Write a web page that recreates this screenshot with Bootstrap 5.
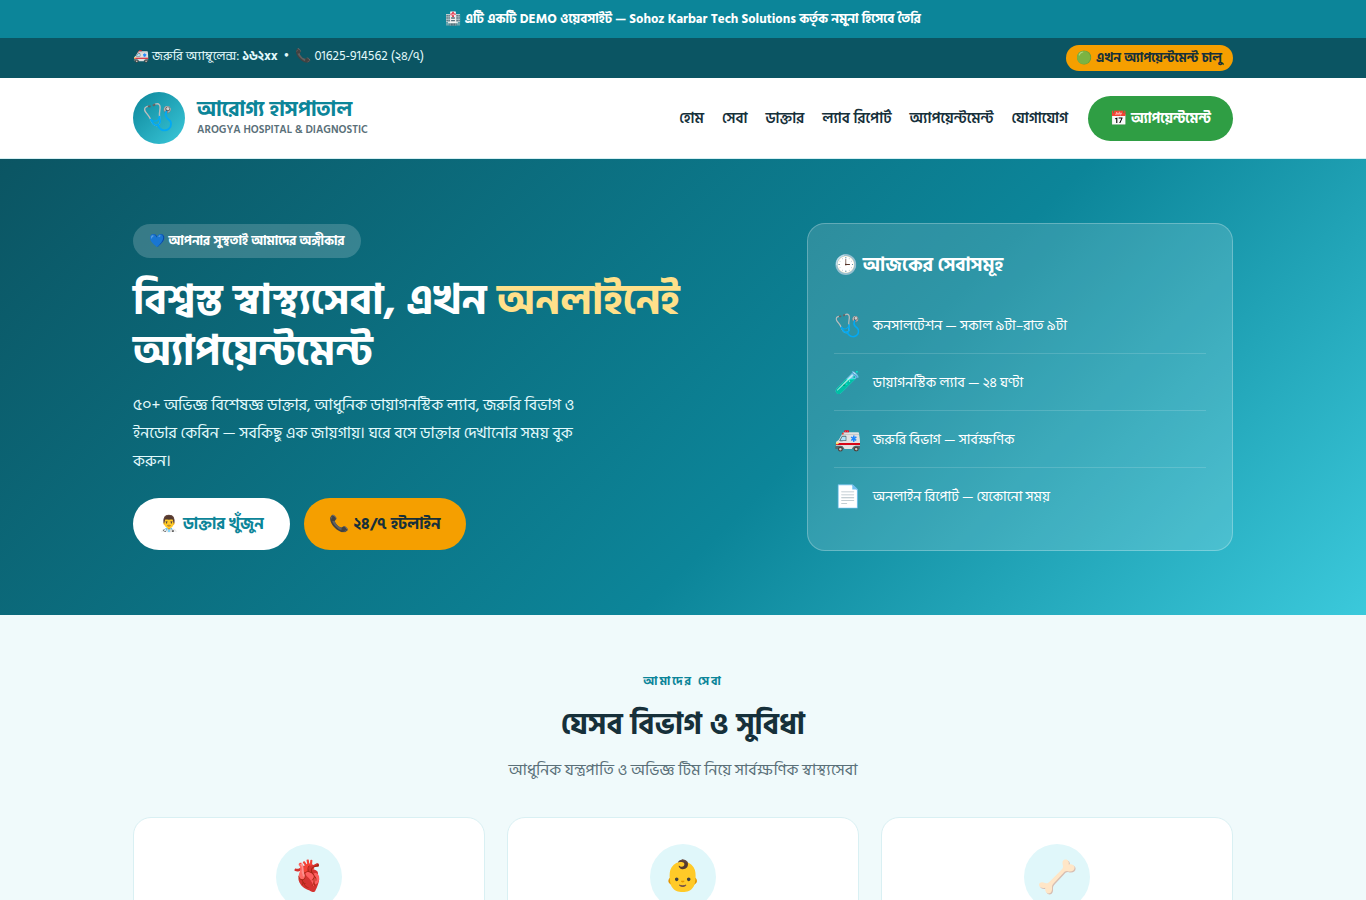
<!DOCTYPE html>
<html lang="bn">
<head>
<meta charset="utf-8">
<meta name="viewport" content="width=device-width, initial-scale=1">
<title>আরোগ্য হাসপাতাল</title>
<link rel="stylesheet" href="https://cdn.jsdelivr.net/npm/bootstrap@5.3.0/dist/css/bootstrap.min.css">
<style>
:root { --teal: #0c8599; --teal-dark: #0b5563; --cyan: #3bc9db; --green: #2f9e44; --amber: #f59f00; --ink: #16303a; --muted: #5a7079; }
body { font-family: "Hind Siliguri", "Noto Sans", "Noto Color Emoji", sans-serif; color: var(--ink); background: #f0fafb; font-size: 16px; line-height: 1.7; }
.container { max-width: 1140px; padding-left: 20px; padding-right: 20px; }
.demo-bar { background: var(--teal); color: #fff; font-size: 13px; padding: 8px 16px; }
.info-bar { background: var(--teal-dark); color: #e3fafc; font-size: 13px; padding: 7px 0; }
.info-bar a { color: inherit; }
.open-pill { background: var(--amber); padding: 2px 11px; color: var(--ink); }
.site-nav { background: #fff; border-bottom: 1px solid #d5f0f3; padding: 14px 0; }
.brand-logo { width: 52px; height: 52px; font-size: 26px; line-height: 1; background: linear-gradient(135deg, var(--teal), var(--cyan)); }
.brand-name { color: var(--teal); font-size: 21px; line-height: 24px; }
.brand-sub { color: var(--muted); font-size: 11px; line-height: 16px; }
.site-nav .navbar-nav { gap: 18px; }
.site-nav .navbar-nav .nav-link { color: var(--ink); font-size: 15px; font-weight: 600; padding: 2px 0 0; }
.book-btn { --bs-btn-color: #fff; --bs-btn-bg: var(--green); --bs-btn-hover-color: #fff; --bs-btn-hover-bg: #2b8a3e; --bs-btn-border-width: 0; font-size: 14px; line-height: 25px; padding: 10px 22px; margin-left: 20px; }
.hero { background: linear-gradient(135deg, var(--teal-dark), var(--teal) 60%, var(--cyan)); color: #fff; padding: 64px 0; }
.hero-grid { display: grid; grid-template-columns: 3fr 2fr; gap: 36px; }
.hero-tag { background: rgba(255,255,255,.18); font-size: 13px; padding: 6px 16px; margin-bottom: 18px; }
.hero h1 { font-size: 42px; line-height: 51px; margin-bottom: 13px; }
.hero h1 span { color: #ffe08a; }
.hero-text { color: #e3fafc; font-size: 16px; line-height: 28px; max-width: 460px; margin-bottom: 23px; }
.hero-actions { gap: 14px; }
.hero-btn { --bs-btn-border-width: 0; --bs-btn-color: var(--ink); font-size: 16px; line-height: 28px; padding: 12px 26px; }
.hero-btn-light { --bs-btn-color: var(--teal); --bs-btn-bg: #fff; --bs-btn-hover-bg: #e3fafc; }
.hero-btn-amber { --bs-btn-bg: var(--amber); --bs-btn-hover-bg: #f08c00; }
.today { background: rgba(255,255,255,.14); border: 1px solid rgba(255,255,255,.25); border-radius: 18px; padding: 26px; }
.today h2 { font-size: 19px; line-height: 32px; margin-bottom: 15px; }
.today li { font-size: 14px; gap: 11px; min-height: 57px; padding-top: 2px; border-bottom: 1px solid rgba(255,255,255,.15); }
.today li:last-child { border-bottom: 0; min-height: 56px; }
.today li span { font-size: 22px; line-height: 1; }
.services { padding: 56px 0; }
.eyebrow { color: var(--teal); font-size: 12px; letter-spacing: 2px; line-height: 22px; }
.services h2 { font-size: 30px; line-height: 50px; margin: 7px 0; }
.services-lead { color: var(--muted); font-size: 16px; line-height: 26px; margin-bottom: 34px; }
.services .row { --bs-gutter-x: 22px; --bs-gutter-y: 22px; }
.service-card { background: #fff; border: 1px solid #d9f0f3; border-radius: 18px; padding: 26px; }
.service-icon { width: 66px; height: 66px; font-size: 30px; line-height: 1; background: #e0f7fa; }
@media (max-width: 991px) { .hero-grid { grid-template-columns: 1fr; } .book-btn { margin: 12px 0 0; } }
</style>
</head>
<body>
<div class="demo-bar text-center fw-bold">🏥 এটি একটি DEMO ওয়েবসাইট — Sohoz Karbar Tech Solutions কর্তৃক নমুনা হিসেবে তৈরি</div>

<div class="info-bar">
  <div class="container d-flex flex-wrap justify-content-between">
    <div>🚑 জরুরি অ্যাম্বুলেন্স: <b>১৬২xx</b> &nbsp;•&nbsp; 📞 <a class="text-decoration-none" href="tel:01625914562">01625-914562</a> (২৪/৭)</div>
    <span class="open-pill rounded-pill fw-bold">🟢 এখন অ্যাপয়েন্টমেন্ট চালু</span>
  </div>
</div>

<nav class="site-nav navbar navbar-expand-lg">
  <div class="container">
    <a class="navbar-brand d-flex align-items-center p-0 m-0" href="#">
      <span class="brand-logo rounded-circle d-flex align-items-center justify-content-center me-2">🩺</span>
      <span class="ms-1">
        <span class="brand-name d-block fw-bold">আরোগ্য হাসপাতাল</span>
        <span class="brand-sub d-block fw-semibold">AROGYA HOSPITAL &amp; DIAGNOSTIC</span>
      </span>
    </a>
    <button class="navbar-toggler" type="button" data-bs-toggle="collapse" data-bs-target="#menu" aria-label="মেনু" aria-controls="menu"><span class="navbar-toggler-icon"></span></button>
    <div class="collapse navbar-collapse" id="menu">
      <ul class="navbar-nav ms-auto">
        <li><a class="nav-link" href="#">হোম</a></li>
        <li><a class="nav-link" href="#services">সেবা</a></li>
        <li><a class="nav-link" href="#">ডাক্তার</a></li>
        <li><a class="nav-link" href="#">ল্যাব রিপোর্ট</a></li>
        <li><a class="nav-link" href="#">অ্যাপয়েন্টমেন্ট</a></li>
        <li><a class="nav-link" href="#">যোগাযোগ</a></li>
      </ul>
      <button type="button" class="btn book-btn rounded-pill fw-bold">📅 অ্যাপয়েন্টমেন্ট</button>
    </div>
  </div>
</nav>

<header class="hero">
  <div class="container hero-grid align-items-center">
    <div>
      <span class="hero-tag d-table rounded-pill fw-bold">💙 আপনার সুস্থতাই আমাদের অঙ্গীকার</span>
      <h1 class="fw-bold">বিশ্বস্ত স্বাস্থ্যসেবা, এখন <span>অনলাইনেই</span> অ্যাপয়েন্টমেন্ট</h1>
      <p class="hero-text">৫০+ অভিজ্ঞ বিশেষজ্ঞ ডাক্তার, আধুনিক ডায়াগনস্টিক ল্যাব, জরুরি বিভাগ ও ইনডোর কেবিন — সবকিছু এক জায়গায়। ঘরে বসে ডাক্তার দেখানোর সময় বুক করুন।</p>
      <div class="hero-actions d-flex flex-wrap">
        <button type="button" class="btn hero-btn hero-btn-light rounded-pill fw-bold">👨‍⚕️ ডাক্তার খুঁজুন</button>
        <button type="button" class="btn hero-btn hero-btn-amber rounded-pill fw-bold">📞 ২৪/৭ হটলাইন</button>
      </div>
    </div>
    <div class="today">
      <h2 class="fw-bold">🕒 আজকের সেবাসমূহ</h2>
      <ul class="list-unstyled mb-0">
        <li class="d-flex align-items-center"><span>🩺</span>কনসালটেশন — সকাল ৯টা–রাত ৯টা</li>
        <li class="d-flex align-items-center"><span>🧪</span>ডায়াগনস্টিক ল্যাব — ২৪ ঘণ্টা</li>
        <li class="d-flex align-items-center"><span>🚑</span>জরুরি বিভাগ — সার্বক্ষণিক</li>
        <li class="d-flex align-items-center"><span>📄</span>অনলাইন রিপোর্ট — যেকোনো সময়</li>
      </ul>
    </div>
  </div>
</header>

<main class="services" id="services">
  <div class="container">
    <div class="text-center">
      <div class="eyebrow fw-bold">আমাদের সেবা</div>
      <h2 class="fw-bold">যেসব বিভাগ ও সুবিধা</h2>
      <p class="services-lead">আধুনিক যন্ত্রপাতি ও অভিজ্ঞ টিম নিয়ে সার্বক্ষণিক স্বাস্থ্যসেবা</p>
    </div>
    <div class="row row-cols-1 row-cols-md-3">
      <div class="col"><div class="service-card"><div class="service-icon rounded-circle d-flex align-items-center justify-content-center mx-auto">🫀</div></div></div>
      <div class="col"><div class="service-card"><div class="service-icon rounded-circle d-flex align-items-center justify-content-center mx-auto">👶</div></div></div>
      <div class="col"><div class="service-card"><div class="service-icon rounded-circle d-flex align-items-center justify-content-center mx-auto">
        <svg width="38" height="36" viewBox="0 0 38 36" aria-hidden="true">
          <defs><path id="bone" d="M25 7C23.600 1.500 25.500.4 27.700.4c2.400 0 3.600 2.200 3 5.200 3-.9 5.900.6 5.900 3.200 0 3.100-3.500 4.500-6.900 3.400-1.900-.4-3.100.5-4.500 2l-9.400 10c-1.600 1.700-1.900 3-1.800 4.800.3 3-.9 5.400-3.300 5.400-2.700 0-3.800-2.400-3.500-5.600C4 29.500 1 28.200 1 25.700c0-2.600 3-3.300 6-1.700 2 .8 3.400 0 4.800-1.500l11-11c1.700-1.700 2.500-2.800 2.200-4.500z"/></defs>
          <use href="#bone" y="1" x="1" fill="#d7beb2"/>
          <use href="#bone" fill="#ffe6c7"/>
        </svg>
      </div></div></div>
    </div>
  </div>
</main>
<script src="https://cdn.jsdelivr.net/npm/bootstrap@5.3.0/dist/js/bootstrap.bundle.min.js"></script>
</body>
</html>
